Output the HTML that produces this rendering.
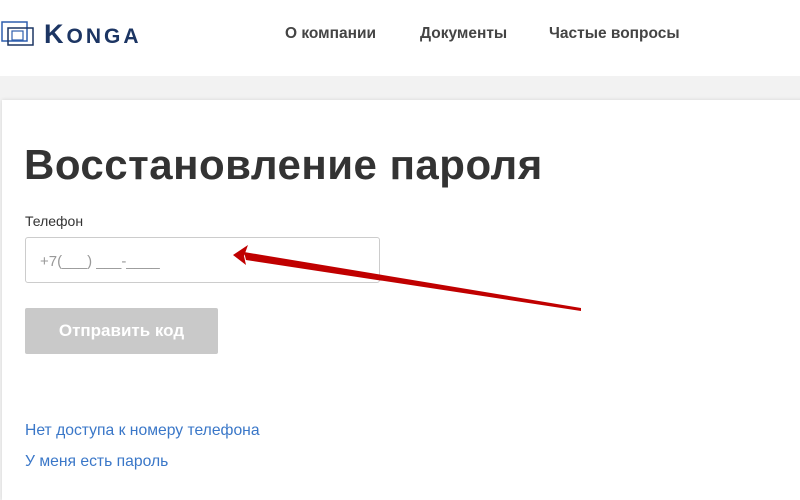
<!DOCTYPE html>
<html><head><meta charset="utf-8"><style>
body{margin:0;width:800px;height:483px;overflow:hidden;background:#f2f2f2;font-family:"Liberation Sans",sans-serif;position:relative}
.hdr{position:absolute;left:0;top:0;width:800px;height:76px;background:#fff}
.logo{position:absolute;left:44px;top:19px;font-size:27px;font-weight:bold;color:#1c3563;letter-spacing:3px}
.logo small{font-size:21px}
.nav{position:absolute;top:25px;font-size:15.5px;font-weight:bold;color:#444}
.card{position:absolute;left:2px;top:100px;width:810px;height:400px;background:#fff;box-shadow:0 0 4px rgba(0,0,0,.12)}
h1{position:absolute;left:24px;top:141px;margin:0;font-size:42px;font-weight:bold;color:#333;letter-spacing:.5px}
.lbl{position:absolute;left:25px;top:213px;font-size:14px;color:#333}
.inp{position:absolute;left:25px;top:237px;width:355px;height:46px;border:1px solid #ccc;border-radius:3px;box-sizing:border-box}
.ph{position:absolute;left:40px;top:253px;font-size:15px;color:#999}
.btn{position:absolute;left:25px;top:308px;width:193px;height:46px;background:#c9c9c9;color:#fff;font-weight:bold;font-size:17px;text-align:center;line-height:46px;border-radius:2px}
.lnk{position:absolute;left:25px;font-size:15.7px;color:#3a77c8}
</style></head><body>
<div class="hdr"></div>
<svg style="position:absolute;left:0;top:18px" width="40" height="30"><rect x="2" y="4" width="25" height="19" fill="none" stroke="#2f5fae" stroke-width="1.5"/><rect x="8" y="10" width="25" height="17" fill="none" stroke="#1c3563" stroke-width="1.5"/><rect x="12" y="13" width="11" height="9" fill="none" stroke="#2f5fae" stroke-width="1.2"/></svg>
<div class="logo">K<small>ONGA</small></div>
<div class="nav" style="left:285px">О компании</div>
<div class="nav" style="left:420px">Документы</div>
<div class="nav" style="left:549px">Частые вопросы</div>
<div class="card"></div>
<h1>Восстановление пароля</h1>
<div class="lbl">Телефон</div>
<div class="inp"></div>
<div class="ph">+7(___) ___-____</div>
<div class="btn">Отправить код</div>
<div class="lnk" style="top:422px">Нет доступа к номеру телефона</div>
<div class="lnk" style="top:453px">У меня есть пароль</div>
<svg style="position:absolute;left:0;top:0" width="800" height="483"><polygon points="581,308 581,311 246,260 244,252" fill="#c00000"/><polygon points="233,255 248,245 244,256 246,265" fill="#c00000"/></svg>
</body></html>
